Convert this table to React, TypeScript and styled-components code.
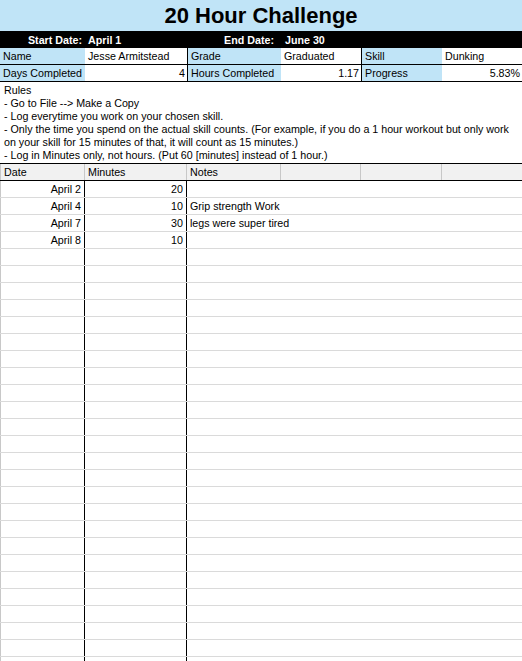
import React from "react";
import styled, { createGlobalStyle, css } from "styled-components";

const Global = createGlobalStyle`
  html, body {
    margin: 0;
    padding: 0;
    overflow: hidden;
    background: #ffffff;
  }
  body {
    font-family: "Liberation Sans", Arial, sans-serif;
    font-size: 10.7px;
    color: #000;
  }
  * { box-sizing: border-box; }
`;

const COLS = "85px 102px 94px 80px 81px 80px";
const BLUE = "#c0e4f7";

const Sheet = styled.div`
  width: 522px;
`;

const Title = styled.div`
  height: 31px;
  background: ${BLUE};
  display: flex;
  align-items: center;
  justify-content: center;
  font-size: 22px;
  font-weight: bold;
  padding-top: 1px;
`;

const Band = styled.div`
  display: grid;
  grid-template-columns: ${COLS};
  height: 17px;
  background: #000;
  color: #fff;
  font-weight: bold;
`;

const BandCell = styled.div<{ $right?: boolean; $pad?: number }>`
  display: flex;
  align-items: center;
  white-space: nowrap;
  justify-content: ${(p) => (p.$right ? "flex-end" : "flex-start")};
  ${(p) =>
    p.$right
      ? css`padding-right: ${p.$pad ?? 3}px;`
      : css`padding-left: ${p.$pad ?? 3}px;`}
`;

const InfoRow = styled.div`
  display: grid;
  grid-template-columns: ${COLS};
  height: 17px;
  border-bottom: 1px solid #000;
`;

const InfoCell = styled.div<{ $label?: boolean; $right?: boolean; $divider?: boolean }>`
  display: flex;
  align-items: center;
  white-space: nowrap;
  overflow: hidden;
  background: ${(p) => (p.$label ? BLUE : "#fff")};
  justify-content: ${(p) => (p.$right ? "flex-end" : "flex-start")};
  padding: ${(p) => (p.$right ? "0 2px 0 0" : "0 0 0 3px")};
  border-left: ${(p) => (p.$divider ? "1px solid #000" : "none")};
`;

const Rules = styled.div`
  padding: 2px 0 0 4px;
  height: 81px;
`;

const RuleLine = styled.div`
  height: 13px;
  line-height: 13px;
  white-space: nowrap;
`;

const HeaderRow = styled.div`
  display: grid;
  grid-template-columns: ${COLS};
  height: 18px;
  background: #f1f1f1;
  border-top: 1px solid #000;
  border-bottom: 1px solid #000;
`;

const HeaderCell = styled.div<{ $last?: boolean }>`
  display: flex;
  align-items: center;
  padding-left: 3px;
  border-right: ${(p) => (p.$last ? "none" : "1px solid #c8c8c8")};
  &:first-child {
    border-left: 1px solid #c8c8c8;
  }
`;

const DataRow = styled.div`
  display: grid;
  grid-template-columns: 85px 102px 335px;
  height: 17px;
  border-bottom: 1px solid #dadada;
`;

const DataCell = styled.div<{ $right?: boolean; $edge?: "left" | "right" }>`
  display: flex;
  align-items: center;
  white-space: nowrap;
  justify-content: ${(p) => (p.$right ? "flex-end" : "flex-start")};
  padding: ${(p) => (p.$right ? "0 3px 0 0" : "0 0 0 3px")};
  ${(p) =>
    p.$edge === "left" &&
    css`
      border-left: 1px solid #c8c8c8;
      border-right: 1px solid #000;
    `}
  ${(p) =>
    p.$edge === "right" &&
    css`
      border-right: 1px solid #000;
    `}
`;

const entries: [string, string, string][] = [
  ["April 2", "20", ""],
  ["April 4", "10", "Grip strength Work"],
  ["April 7", "30", "legs were super tired"],
  ["April 8", "10", ""],
];

const rows: [string, string, string][] = [
  ...entries,
  ...Array.from({ length: 26 }, () => ["", "", ""] as [string, string, string]),
];

const ruleLines = [
  "Rules",
  "- Go to File --> Make a Copy",
  "- Log everytime you work on your chosen skill.",
  "- Only the time you spend on the actual skill counts. (For example, if you do a 1 hour workout but only work",
  "on your skill for 15 minutes of that, it will count as 15 minutes.)",
  "- Log in Minutes only, not hours. (Put 60 [minutes] instead of 1 hour.)",
];

export default function App() {
  return (
    <Sheet>
      <Global />
      <Title>20 Hour Challenge</Title>
      <Band>
        <BandCell $right>Start Date:</BandCell>
        <BandCell $pad={3}>April 1</BandCell>
        <BandCell $right $pad={7}>End Date:</BandCell>
        <BandCell $pad={4}>June 30</BandCell>
        <BandCell />
        <BandCell />
      </Band>
      <InfoRow>
        <InfoCell $label>Name</InfoCell>
        <InfoCell>Jesse Armitstead</InfoCell>
        <InfoCell $label $divider>Grade</InfoCell>
        <InfoCell>Graduated</InfoCell>
        <InfoCell $label $divider>Skill</InfoCell>
        <InfoCell>Dunking</InfoCell>
      </InfoRow>
      <InfoRow>
        <InfoCell $label>Days Completed</InfoCell>
        <InfoCell $right>4</InfoCell>
        <InfoCell $label $divider>Hours Completed</InfoCell>
        <InfoCell $right>1.17</InfoCell>
        <InfoCell $label $divider>Progress</InfoCell>
        <InfoCell $right>5.83%</InfoCell>
      </InfoRow>
      <Rules>
        {ruleLines.map((l, i) => (
          <RuleLine key={i}>{l}</RuleLine>
        ))}
      </Rules>
      <HeaderRow>
        <HeaderCell>Date</HeaderCell>
        <HeaderCell>Minutes</HeaderCell>
        <HeaderCell>Notes</HeaderCell>
        <HeaderCell />
        <HeaderCell />
        <HeaderCell $last />
      </HeaderRow>
      {rows.map(([d, m, n], i) => (
        <DataRow key={i}>
          <DataCell $right $edge="left">{d}</DataCell>
          <DataCell $right $edge="right">{m}</DataCell>
          <DataCell>{n}</DataCell>
        </DataRow>
      ))}
    </Sheet>
  );
}
